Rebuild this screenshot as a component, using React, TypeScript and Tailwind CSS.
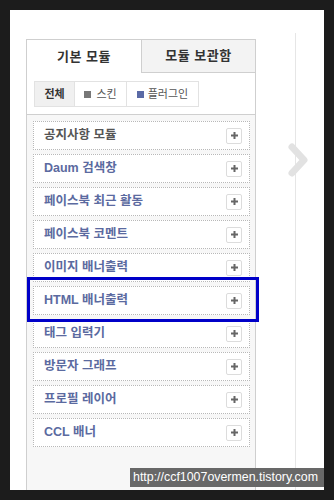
import React from "react";

const items: { label: string; grey?: boolean }[] = [
  { label: "공지사항 모듈", grey: true },
  { label: "Daum 검색창" },
  { label: "페이스북 최근 활동" },
  { label: "페이스북 코멘트" },
  { label: "이미지 배너출력" },
  { label: "HTML 배너출력" },
  { label: "태그 입력기" },
  { label: "방문자 그래프" },
  { label: "프로필 레이어" },
  { label: "CCL 배너" },
];

const KR = { fontFamily: '"Liberation Sans", "Noto Sans CJK KR", sans-serif' };

export default function App() {
  return (
    <div className="relative w-[334px] h-[500px] bg-[#1c1c1c] p-[10px]" style={KR}>
      <div className="relative flex h-[480px] bg-white pt-[23px] pl-[16px]">
        <div className="mt-[6px] w-[230px] flex flex-col border-l border-r border-t border-[#cfcfcf]">
          <div className="flex h-[33px]">
            <div className="w-[114px] flex items-center justify-center bg-white text-[13px] font-bold text-[#333] tracking-[0.5px]">
              기본 모듈
            </div>
            <div className="flex-1 flex items-center justify-center bg-[#f3f3f3] border-l border-b border-[#cfcfcf] text-[13px] font-bold text-[#333] tracking-[0.5px]">
              모듈 보관함
            </div>
          </div>
          <div className="bg-white pt-[8px] pb-[7px] pl-[7px] border-b border-[#cfcfcf]">
            <div className="flex h-[26px] text-[11px]">
              <div className="w-[41px] flex items-center justify-center bg-[#f0f0f0] border border-[#e2e2e2] font-bold text-[#333]">
                전체
              </div>
              <div className="w-[52px] flex items-center justify-center gap-[5px] bg-white border-t border-b border-r border-[#e2e2e2] text-[#555]">
                <span className="w-[7px] h-[7px] bg-[#777]" />
                스킨
              </div>
              <div className="w-[72px] flex items-center justify-center gap-[4px] bg-white border-t border-b border-r border-[#e2e2e2] text-[#555]">
                <span className="w-[7px] h-[7px] bg-[#5a6aa6]" />
                플러그인
              </div>
            </div>
          </div>
          <div className="flex-1 bg-[#f7f7f7] pt-[6px] pl-[6px] pr-[5px] flex flex-col gap-[4px]">
            {items.map((it) => (
              <div
                key={it.label}
                className="h-[29px] flex items-center justify-between bg-white border border-dotted border-[#b8b8b8] pl-[10px] pr-[7px]"
              >
                <span
                  className={`text-[12.5px] font-bold ${it.grey ? "text-[#555]" : "text-[#5b6aa0]"}`}
                >
                  {it.label}
                </span>
                <span className="w-[16px] h-[16px] flex items-center justify-center bg-white border border-[#dcdcdc] rounded-[2px]">
                  <svg width="7" height="7" viewBox="0 0 7 7">
                    <rect x="2.5" y="0" width="2" height="7" fill="#666" />
                    <rect x="0" y="2.5" width="7" height="2" fill="#666" />
                  </svg>
                </span>
              </div>
            ))}
          </div>
        </div>
        <div className="ml-[39px] w-px bg-[#e6e6e6]" />
        <svg
          className="absolute left-[277px] top-[132px]"
          width="22"
          height="36"
          viewBox="0 0 22 36"
        >
          <polyline
            points="5,5 17,18 5,31"
            fill="none"
            stroke="#e2e2e2"
            strokeWidth="7"
            strokeLinecap="round"
            strokeLinejoin="round"
          />
        </svg>
        <div className="absolute left-[17px] top-[267px] w-[232px] h-[45px] border-[3px] border-[#0000c8]" />
      </div>
      <div className="absolute left-[130px] top-[468px] w-[194px] h-[19px] bg-[#686868] flex items-center pl-[3px] text-white text-[12.4px]" style={{ fontFamily: '"Liberation Sans", sans-serif' }}>
        http://ccf1007overmen.tistory.com
      </div>
    </div>
  );
}
